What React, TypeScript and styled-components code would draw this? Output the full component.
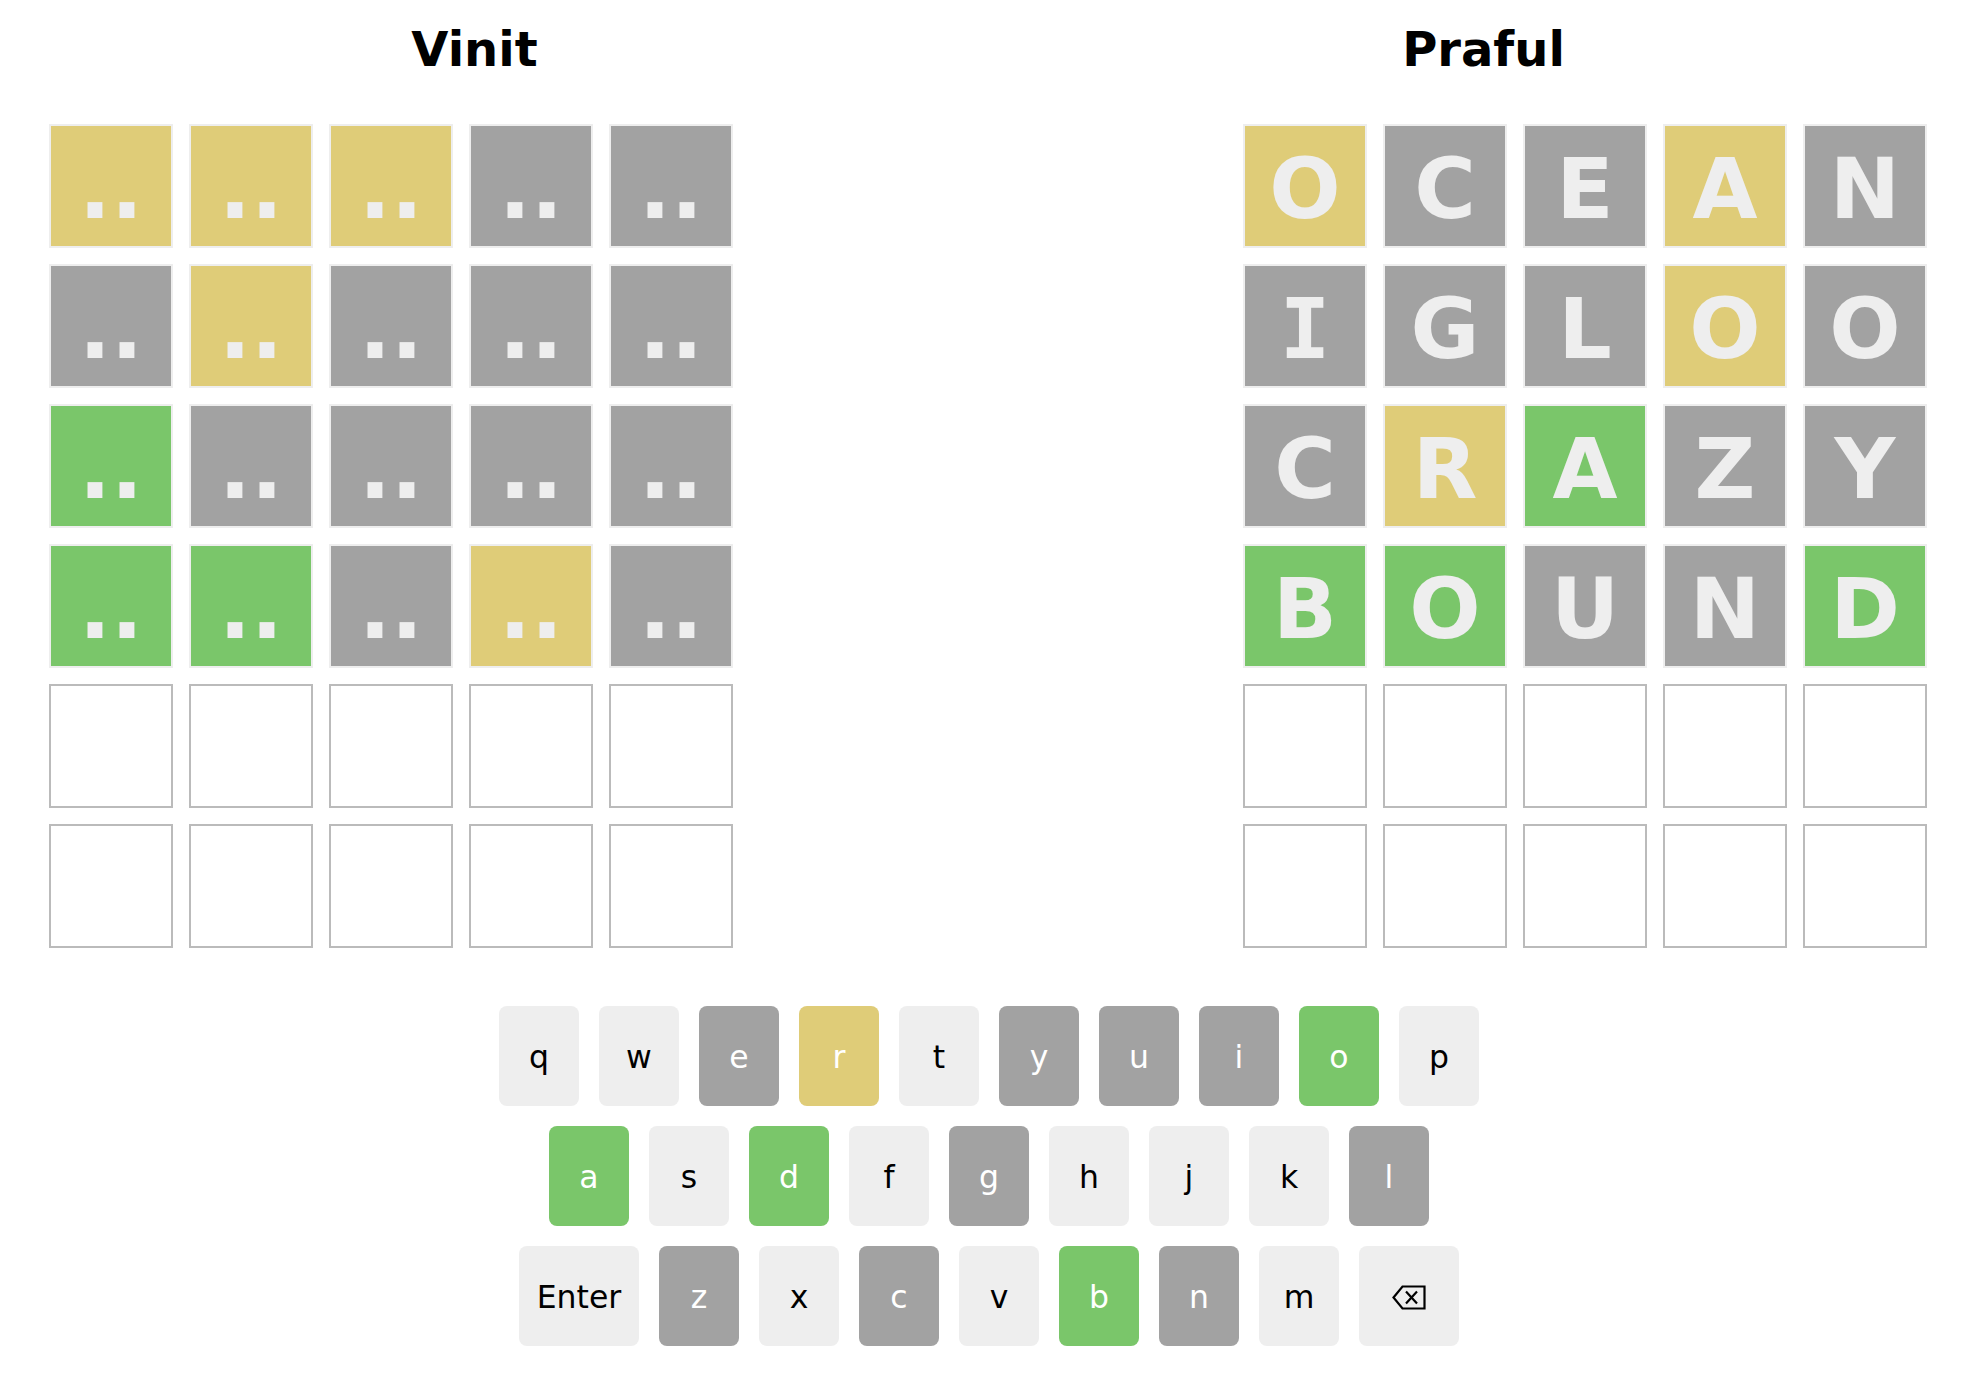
import React from 'react';
import styled, { createGlobalStyle } from 'styled-components';

type State = 'correct' | 'present' | 'absent' | 'empty';
type KeyState = 'correct' | 'present' | 'absent' | 'unused';

const colors = {
  correct: '#7ac66a',
  present: '#dfcc78',
  absent: '#a2a2a2',
  light: '#eeeeee',
  emptyBorder: '#bbbbbb',
};

const GlobalStyle = createGlobalStyle`
  body {
    margin: 0;
    background: #ffffff;
    font-family: 'DejaVu Sans', Verdana, sans-serif;
  }
`;

const Page = styled.div`
  padding-top: 21px;
`;

const Boards = styled.div`
  display: flex;
  justify-content: space-between;
  padding: 0 51px 0 49px;
`;

const Player = styled.section<{ $align: 'start' | 'end'; $width: number }>`
  display: flex;
  flex-direction: column;
  align-items: ${(p) => (p.$align === 'start' ? 'flex-start' : 'flex-end')};
  width: ${(p) => p.$width}px;
`;

const Title = styled.h2`
  width: 100%;
  margin: 0 0 47px;
  font-size: 48px;
  line-height: 56px;
  font-weight: bold;
  text-align: center;
  color: #000;
`;

const Board = styled.div`
  display: grid;
  grid-template-columns: repeat(5, 124px);
  grid-auto-rows: 124px;
  gap: 16px;
`;

const Tile = styled.div<{ $state: State; $slab?: boolean }>`
  box-sizing: border-box;
  display: flex;
  align-items: center;
  justify-content: center;
  padding-top: 5px;
  border: 2px solid
    ${(p) => (p.$state === 'empty' ? colors.emptyBorder : colors.light)};
  background: ${(p) => (p.$state === 'empty' ? '#fff' : colors[p.$state])};
  color: ${colors.light};
  font-family: ${(p) =>
    p.$slab ? "'DejaVu Sans Mono', monospace" : "'DejaVu Sans', Verdana, sans-serif"};
  font-size: 84px;
  font-weight: bold;
  line-height: 1;
`;

const Keyboard = styled.div`
  margin-top: 58px;
  display: flex;
  flex-direction: column;
  align-items: center;
  gap: 20px;
`;

const KeyRow = styled.div`
  display: flex;
  gap: 20px;
`;

const Key = styled.button<{ $state: KeyState; $width?: number }>`
  width: ${(p) => p.$width ?? 80}px;
  height: 100px;
  border: none;
  border-radius: 8px;
  padding: 2px 0 0;
  display: flex;
  align-items: center;
  justify-content: center;
  font-family: 'DejaVu Sans', Verdana, sans-serif;
  font-size: 31.5px;
  background: ${(p) => (p.$state === 'unused' ? colors.light : colors[p.$state])};
  color: ${(p) => (p.$state === 'unused' ? '#000' : '#fff')};
`;

const G: State = 'absent';
const Y: State = 'present';
const C: State = 'correct';
const E: State = 'empty';

const vinit: State[][] = [
  [Y, Y, Y, G, G],
  [G, Y, G, G, G],
  [C, G, G, G, G],
  [C, C, G, Y, G],
  [E, E, E, E, E],
  [E, E, E, E, E],
];

const praful: { words: string[]; states: State[][] } = {
  words: ['OCEAN', 'IGLOO', 'CRAZY', 'BOUND', '     ', '     '],
  states: [
    [Y, G, G, Y, G],
    [G, G, G, Y, G],
    [G, Y, C, G, G],
    [C, C, G, G, C],
    [E, E, E, E, E],
    [E, E, E, E, E],
  ],
};

const keyRows: [string, KeyState][][] = [
  [
    ['q', 'unused'], ['w', 'unused'], ['e', 'absent'], ['r', 'present'], ['t', 'unused'],
    ['y', 'absent'], ['u', 'absent'], ['i', 'absent'], ['o', 'correct'], ['p', 'unused'],
  ],
  [
    ['a', 'correct'], ['s', 'unused'], ['d', 'correct'], ['f', 'unused'], ['g', 'absent'],
    ['h', 'unused'], ['j', 'unused'], ['k', 'unused'], ['l', 'absent'],
  ],
  [
    ['Enter', 'unused'], ['z', 'absent'], ['x', 'unused'], ['c', 'absent'], ['v', 'unused'],
    ['b', 'correct'], ['n', 'absent'], ['m', 'unused'], ['Backspace', 'unused'],
  ],
];

const BackspaceIcon = () => (
  <svg width="34" height="25" viewBox="0 0 34 25" fill="none" stroke="#000" strokeWidth="2.2">
    <path d="M1.5 12.5 L10.5 1.5 H32.5 V23.5 H10.5 Z" strokeLinejoin="miter" />
    <path d="M14 6.5 L25 18.5 M25 6.5 L14 18.5" />
  </svg>
);

export default function App() {
  return (
    <Page>
      <GlobalStyle />
      <Boards>
        <Player $align="start" $width={851}>
          <Title>Vinit</Title>
          <Board>
            {vinit.map((row, r) =>
              row.map((s, c) => (
                <Tile key={`v${r}${c}`} $state={s}>
                  {s === 'empty' ? '' : '..'}
                </Tile>
              ))
            )}
          </Board>
        </Player>
        <Player $align="end" $width={887}>
          <Title>Praful</Title>
          <Board>
            {praful.states.map((row, r) =>
              row.map((s, c) => {
                const letter = praful.words[r][c].trim();
                return (
                  <Tile key={`p${r}${c}`} $state={s} $slab={letter === 'I'}>
                    {letter}
                  </Tile>
                );
              })
            )}
          </Board>
        </Player>
      </Boards>
      <Keyboard>
        {keyRows.map((row, r) => (
          <KeyRow key={r}>
            {row.map(([k, s]) => (
              <Key
                key={k}
                $state={s}
                $width={k === 'Enter' ? 120 : k === 'Backspace' ? 100 : 80}
              >
                {k === 'Backspace' ? <BackspaceIcon /> : k}
              </Key>
            ))}
          </KeyRow>
        ))}
      </Keyboard>
    </Page>
  );
}
